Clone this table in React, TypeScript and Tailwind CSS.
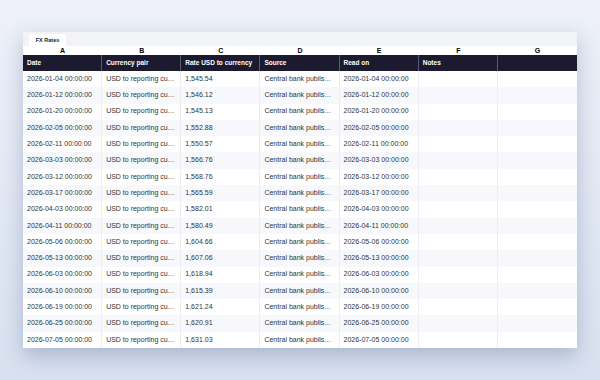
const rows: [string, string][] = [
  ["2026-01-04", "1,545.54"],
  ["2026-01-12", "1,546.12"],
  ["2026-01-20", "1,545.13"],
  ["2026-02-05", "1,552.88"],
  ["2026-02-11", "1,550.57"],
  ["2026-03-03", "1,566.76"],
  ["2026-03-12", "1,568.76"],
  ["2026-03-17", "1,565.59"],
  ["2026-04-03", "1,582.01"],
  ["2026-04-11", "1,580.49"],
  ["2026-05-06", "1,604.66"],
  ["2026-05-13", "1,607.06"],
  ["2026-06-03", "1,618.94"],
  ["2026-06-10", "1,615.39"],
  ["2026-06-19", "1,621.24"],
  ["2026-06-25", "1,620.91"],
  ["2026-07-05", "1,631.03"],
];

const letters = ["A", "B", "C", "D", "E", "F", "G"];
const headers = ["Date", "Currency pair", "Rate USD to currency", "Source", "Read on", "Notes", ""];

export default function App() {
  return (
    <div
      className="flex h-[380px] w-[600px] justify-center bg-gradient-to-b from-[#eef1f9] to-[#d9e1f0] pt-[32px]"
      style={{ fontFamily: '"Liberation Sans", Arial, sans-serif' }}
    >
      <div className="h-[316px] w-[554px] overflow-hidden bg-white shadow-[0_8px_20px_rgba(60,80,130,0.3)]">
        <div className="flex h-[14px] items-end bg-[#f1f3f7] pl-[6px]">
          <div className="flex h-[12px] w-[37px] items-center justify-center rounded-t-[2px] bg-white text-[5.5px] font-bold text-[#222]">
            FX Rates
          </div>
        </div>
        <div className="grid h-[9px] grid-cols-7 bg-white">
          {letters.map((l) => (
            <div key={l} className="flex items-center justify-center text-[7px] font-bold leading-none text-black">
              {l}
            </div>
          ))}
        </div>
        <div className="grid h-[16px] grid-cols-7 bg-[#1b1a2e]">
          {headers.map((h, i) => (
            <div
              key={i}
              className="flex items-center border-r border-[#5b5b6e] pl-[4px] text-[6.5px] font-bold text-white last:border-r-0"
            >
              {h}
            </div>
          ))}
        </div>
        {rows.map(([d, r], i) => {
          const cells = [
            `${d} 00:00:00`,
            "USD to reporting cu…",
            r,
            "Central bank publis…",
            `${d} 00:00:00`,
            "",
            "",
          ];
          return (
            <div
              key={i}
              className={`grid h-[16.3px] grid-cols-7 ${i % 2 === 1 ? "bg-[#f6f8fc]" : "bg-white"}`}
            >
              {cells.map((c, j) => (
                <div
                  key={j}
                  className="flex items-center overflow-hidden whitespace-nowrap border-r border-[#eceef2] px-[4px] text-[7px] text-[#333] last:border-r-0"
                >
                  {c}
                </div>
              ))}
            </div>
          );
        })}
      </div>
    </div>
  );
}
